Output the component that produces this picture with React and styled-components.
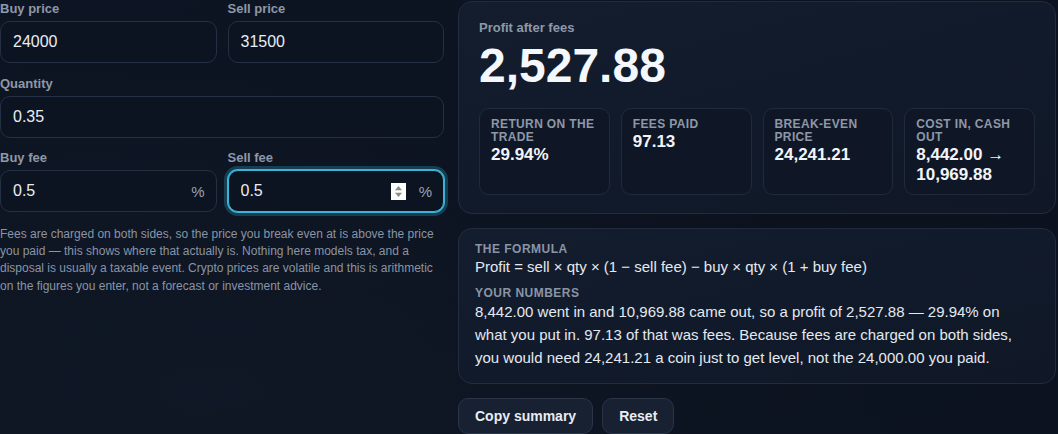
import React, { useState } from "react";
import styled, { createGlobalStyle, css } from "styled-components";

const GlobalStyle = createGlobalStyle`
  * { box-sizing: border-box; }
  html, body {
    margin: 0;
    padding: 0;
    background: #0b121e;
    overflow: hidden;
  }
  body {
    font-family: "Liberation Sans", Arial, Helvetica, sans-serif;
    color: #e6ebf2;
    -webkit-font-smoothing: antialiased;
  }
`;

const Page = styled.div`
  display: grid;
  grid-template-columns: 444px 598px;
  column-gap: 14px;
  align-items: start;
  padding-top: 1px;
  min-height: 434px;
  background:
    radial-gradient(ellipse at 20% 90%, rgba(20, 30, 46, 0.55), transparent 60%),
    linear-gradient(160deg, #0d1524 0%, #0b111d 60%, #0c1320 100%);
`;

const LeftColumn = styled.section`
  display: flex;
  flex-direction: column;
  min-width: 0;
`;

const FieldGrid = styled.div`
  display: grid;
  grid-template-columns: minmax(0, 1fr) minmax(0, 1fr);
  column-gap: 11px;
  row-gap: 12.5px;
`;

const Field = styled.label`
  display: flex;
  flex-direction: column;
  gap: 5px;
  min-width: 0;
  ${(p) => p.$full && css`grid-column: 1 / -1;`}
`;

const Label = styled.span`
  font-size: 13px;
  line-height: 15px;
  font-weight: 700;
  color: #8e98a8;
`;

const InputBox = styled.div`
  display: flex;
  align-items: center;
  height: 42px;
  padding: 0 11px 0 12px;
  border: 1px solid #243043;
  border-radius: 10px;
  background: #0d1421;
  ${(p) =>
    p.$focused &&
    css`
      border-color: #3db3d6;
      box-shadow: 0 0 0 1px #3db3d6, 0 0 0 4px rgba(40, 140, 175, 0.35);
    `}
`;

const Input = styled.input`
  flex: 1;
  width: 100%;
  min-width: 0;
  border: 0;
  outline: none;
  background: transparent;
  color: #e8edf4;
  font-family: inherit;
  font-size: 16px;
  padding: 0;
`;

const Suffix = styled.span`
  flex: none;
  font-size: 15px;
  color: #98a1b1;
  margin-left: 13px;
`;

const SpinnerIcon = styled.svg`
  flex: none;
  display: block;
`;

const Spinner = () => (
  <SpinnerIcon width="15" height="17" viewBox="0 0 15 17" aria-hidden="true">
    <rect x="0" y="0" width="15" height="17" fill="#ffffff" />
    <path d="M7.5 3 L11 7.3 L4 7.3 Z" fill="#8b8b8b" />
    <path d="M7.5 14 L11 9.7 L4 9.7 Z" fill="#8b8b8b" />
  </SpinnerIcon>
);

const Note = styled.p`
  margin: 13.5px 0 0;
  font-size: 12px;
  line-height: 17.4px;
  color: #8a94a4;
`;

const RightColumn = styled.section`
  display: flex;
  flex-direction: column;
  gap: 14px;
  min-width: 0;
`;

const Card = styled.div`
  border: 1px solid #212c3e;
  border-radius: 14px;
  background: linear-gradient(165deg, #141d2e 0%, #111a2a 55%, #101827 100%);
`;

const ResultCard = styled(Card)`
  padding: 18px 20px 18px;
`;

const ResultLabel = styled.div`
  font-size: 13px;
  line-height: 16px;
  font-weight: 700;
  color: #8e98a8;
`;

const BigNumber = styled.div`
  margin-top: 5.5px;
  font-size: 48px;
  line-height: 48px;
  font-weight: 700;
  color: #f4f7fb;
`;

const StatGrid = styled.div`
  margin-top: 18px;
  display: grid;
  grid-template-columns: repeat(4, minmax(0, 1fr));
  gap: 11px;
`;

const StatBox = styled.div`
  padding: 9px 11px;
  border: 1px solid #1f2a3b;
  border-radius: 10px;
  background: #0f1727;
`;

const StatLabel = styled.div`
  font-size: 12px;
  line-height: 13px;
  font-weight: 700;
  letter-spacing: 0.03em;
  text-transform: uppercase;
  color: #8e98a8;
`;

const StatValue = styled.div`
  margin-top: 1px;
  font-size: 17px;
  line-height: 20px;
  font-weight: 700;
  color: #f1f4f8;
`;

const FormulaCard = styled(Card)`
  padding: 13px 22px 13.5px 16px;
`;

const SectionLabel = styled.div`
  font-size: 12px;
  line-height: 14px;
  font-weight: 700;
  letter-spacing: 0.04em;
  text-transform: uppercase;
  color: #8a94a5;
  margin-top: ${(p) => p.$gap || 0}px;
`;

const FormulaText = styled.div`
  margin-top: 1px;
  font-size: 15px;
  line-height: 20px;
  color: #e4e9f0;
`;

const BodyText = styled.p`
  margin: 0;
  font-size: 15px;
  line-height: 23px;
  color: #e4e9f0;
`;

const ButtonRow = styled.div`
  display: flex;
  gap: 9px;
`;

const Button = styled.button`
  padding: 9px 16px;
  font-family: inherit;
  font-size: 14px;
  line-height: 16px;
  font-weight: 700;
  color: #e8edf4;
  background: #182131;
  border: 1px solid #2a3548;
  border-radius: 10px;
  cursor: pointer;
`;

const stats = [
  { label: "Return on the trade", value: "29.94%" },
  { label: "Fees paid", value: "97.13" },
  { label: "Break-even price", value: "24,241.21" },
  { label: "Cost in, cash out", value: "8,442.00 → 10,969.88" },
];

export default function App() {
  const [values, setValues] = useState({
    buy: "24000",
    sell: "31500",
    qty: "0.35",
    buyFee: "0.5",
    sellFee: "0.5",
  });
  const set = (k) => (e) => setValues({ ...values, [k]: e.target.value });

  return (
    <>
      <GlobalStyle />
      <Page>
        <LeftColumn>
          <FieldGrid>
            <Field>
              <Label>Buy price</Label>
              <InputBox>
                <Input inputMode="decimal" value={values.buy} onChange={set("buy")} />
              </InputBox>
            </Field>
            <Field>
              <Label>Sell price</Label>
              <InputBox>
                <Input inputMode="decimal" value={values.sell} onChange={set("sell")} />
              </InputBox>
            </Field>
            <Field $full>
              <Label>Quantity</Label>
              <InputBox>
                <Input inputMode="decimal" value={values.qty} onChange={set("qty")} />
              </InputBox>
            </Field>
            <Field>
              <Label>Buy fee</Label>
              <InputBox>
                <Input inputMode="decimal" value={values.buyFee} onChange={set("buyFee")} />
                <Suffix>%</Suffix>
              </InputBox>
            </Field>
            <Field>
              <Label>Sell fee</Label>
              <InputBox $focused>
                <Input inputMode="decimal" value={values.sellFee} onChange={set("sellFee")} />
                <Spinner />
                <Suffix>%</Suffix>
              </InputBox>
            </Field>
          </FieldGrid>
          <Note>
            Fees are charged on both sides, so the price you break even at is above the price
            you paid — this shows where that actually is. Nothing here models tax, and a
            disposal is usually a taxable event. Crypto prices are volatile and this is arithmetic
            on the figures you enter, not a forecast or investment advice.
          </Note>
        </LeftColumn>

        <RightColumn>
          <ResultCard>
            <ResultLabel>Profit after fees</ResultLabel>
            <BigNumber>2,527.88</BigNumber>
            <StatGrid>
              {stats.map((s) => (
                <StatBox key={s.label}>
                  <StatLabel>{s.label}</StatLabel>
                  <StatValue>{s.value}</StatValue>
                </StatBox>
              ))}
            </StatGrid>
          </ResultCard>

          <FormulaCard>
            <SectionLabel>The formula</SectionLabel>
            <FormulaText>
              Profit = sell × qty × (1 − sell fee) − buy × qty × (1 + buy fee)
            </FormulaText>
            <SectionLabel $gap={9.5}>Your numbers</SectionLabel>
            <BodyText>
              8,442.00 went in and 10,969.88 came out, so a profit of 2,527.88 — 29.94% on
              what you put in. 97.13 of that was fees. Because fees are charged on both sides,
              you would need 24,241.21 a coin just to get level, not the 24,000.00 you paid.
            </BodyText>
          </FormulaCard>

          <ButtonRow>
            <Button type="button">Copy summary</Button>
            <Button type="button">Reset</Button>
          </ButtonRow>
        </RightColumn>
      </Page>
    </>
  );
}
